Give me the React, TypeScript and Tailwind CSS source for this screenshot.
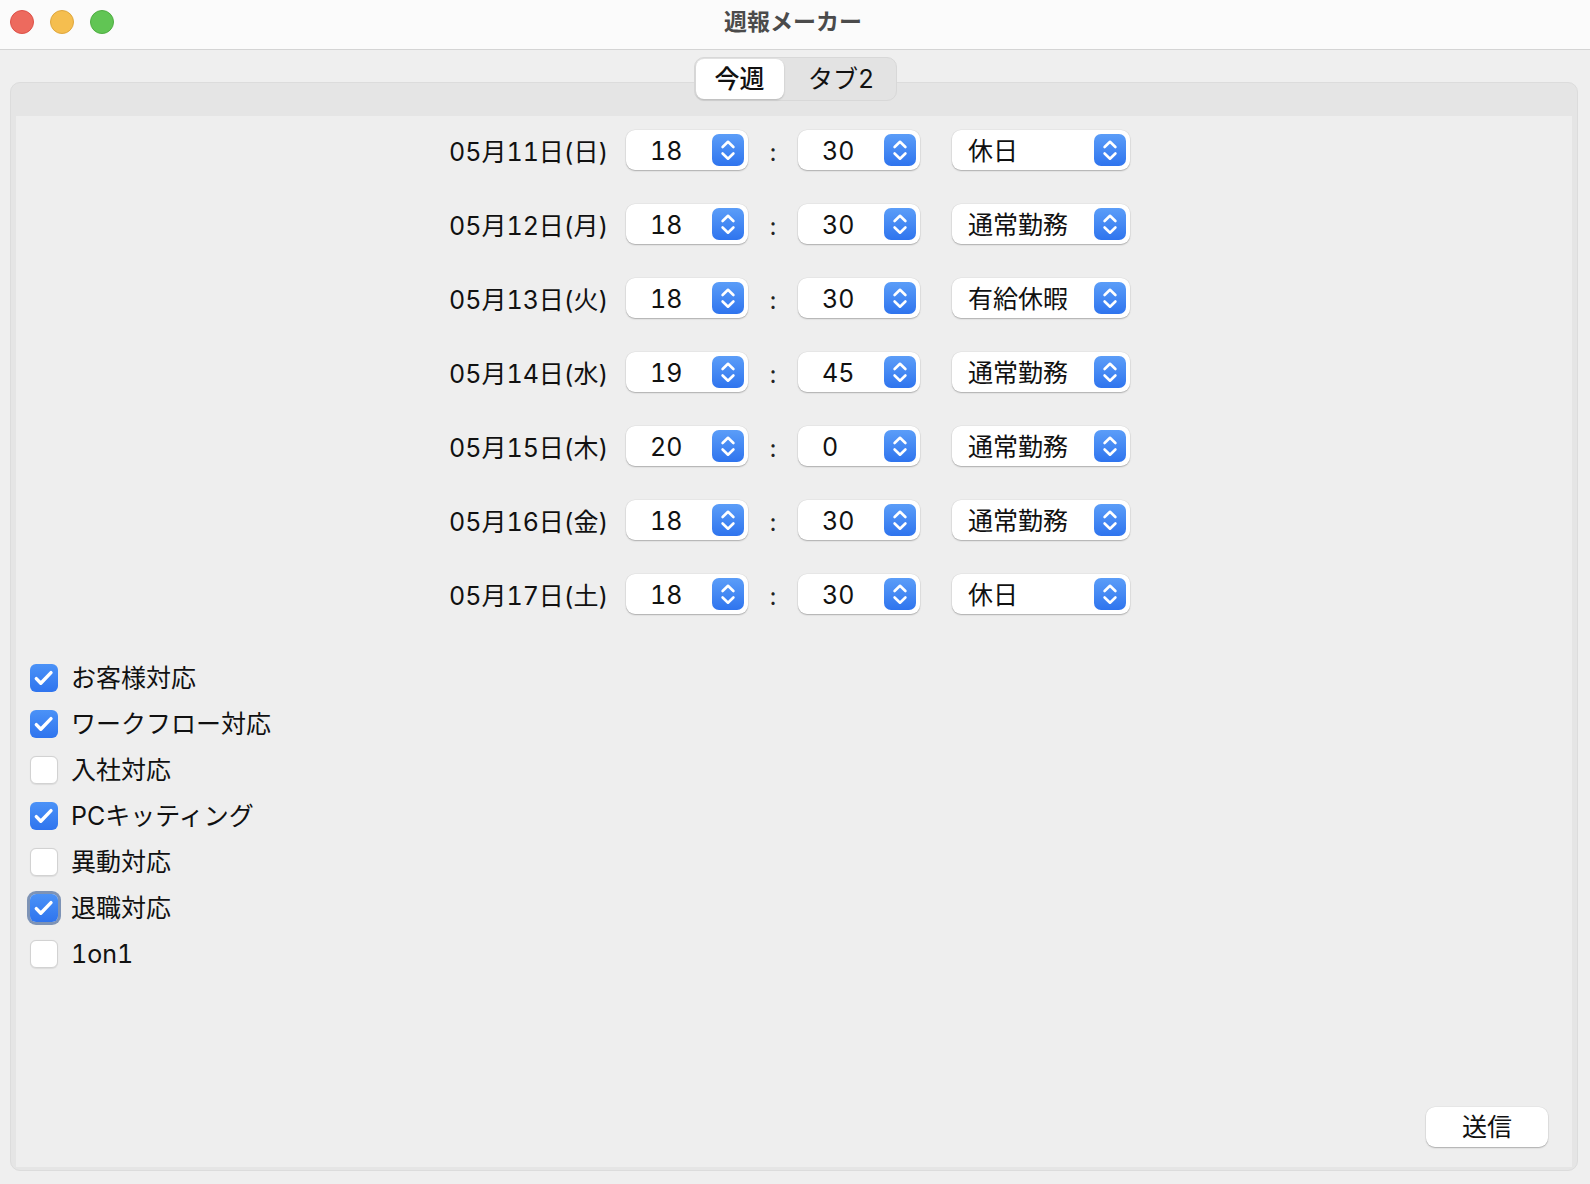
import React, { useState } from "react";

const FONT = { fontFamily: '"Inter", "Noto Sans CJK JP", "Noto Sans", sans-serif', fontVariantNumeric: "tabular-nums" };

const days = [
  { date: "05月11日(日)", hour: "18", min: "30", kind: "休日" },
  { date: "05月12日(月)", hour: "18", min: "30", kind: "通常勤務" },
  { date: "05月13日(火)", hour: "18", min: "30", kind: "有給休暇" },
  { date: "05月14日(水)", hour: "19", min: "45", kind: "通常勤務" },
  { date: "05月15日(木)", hour: "20", min: "0", kind: "通常勤務" },
  { date: "05月16日(金)", hour: "18", min: "30", kind: "通常勤務" },
  { date: "05月17日(土)", hour: "18", min: "30", kind: "休日" },
];

const tasks = [
  { name: "お客様対応", checked: true },
  { name: "ワークフロー対応", checked: true },
  { name: "入社対応", checked: false },
  { name: "PCキッティング", checked: true },
  { name: "異動対応", checked: false },
  { name: "退職対応", checked: true, focus: true },
  { name: "1on1", checked: false },
];

const Stepper = () => (
  <div className="flex h-[32px] w-[32px] items-center justify-center rounded-[7px] bg-gradient-to-b from-[#5b9df8] to-[#2f74ee]">
    <svg width="32" height="32" viewBox="0 0 32 32" fill="none">
      <path d="M10.6 13 L16 7.8 L21.4 13" stroke="white" strokeWidth="2.6" strokeLinecap="round" strokeLinejoin="round" />
      <path d="M10.6 19.5 L16 24.7 L21.4 19.5" stroke="white" strokeWidth="2.6" strokeLinecap="round" strokeLinejoin="round" />
    </svg>
  </div>
);

const Field = ({ value, width, pad }: { value: string; width: string; pad: string }) => (
  <div
    className={`flex h-[40px] ${width} items-center justify-between rounded-[9px] bg-white pr-[4px] ${pad} shadow-[0_1px_1.5px_rgba(0,0,0,0.25),0_0_0_0.5px_rgba(0,0,0,0.06)]`}
  >
    <span className="pt-[2px] text-[25px] leading-none text-[#111]">{value}</span>
    <Stepper />
  </div>
);

const Check = ({ checked, focus }: { checked: boolean; focus?: boolean }) =>
  checked ? (
    <div
      className={`flex h-[28px] w-[28px] items-center justify-center rounded-[6px] bg-gradient-to-b from-[#4b92f7] to-[#2f74ee] ${
        focus ? "ring-[3px] ring-[#7d93b6]" : ""
      }`}
    >
      <svg width="28" height="28" viewBox="0 0 28 28" fill="none">
        <path d="M6.3 14.6 L10.8 19.2 L21 8.6" stroke="white" strokeWidth="3.4" strokeLinecap="round" strokeLinejoin="round" />
      </svg>
    </div>
  ) : (
    <div className="h-[28px] w-[28px] rounded-[6px] border border-[#d2d2d2] bg-white shadow-[0_0.5px_1px_rgba(0,0,0,0.08)]" />
  );

export default function App() {
  const [tab, setTab] = useState(0);

  return (
    <div className="flex h-[1184px] w-full flex-col bg-[#efefef]" style={FONT}>
      {/* title bar */}
      <div className="flex h-[50px] shrink-0 items-start border-b border-[#d4d4d4] bg-[#fbfbfb] px-[10px] pt-[10px]">
        <div className="flex gap-[16px]">
          <div className="h-[24px] w-[24px] rounded-full border border-[#dd5148] bg-[#ed6a5e]" />
          <div className="h-[24px] w-[24px] rounded-full border border-[#dfa73e] bg-[#f5be4f]" />
          <div className="h-[24px] w-[24px] rounded-full border border-[#4fae42] bg-[#61c554]" />
        </div>
        <div className="flex-1 pr-[108px] text-center text-[23px] font-bold leading-[24px] text-[#4b4b4b]">
          週報メーカー
        </div>
      </div>

      <div className="flex flex-1 flex-col items-center">
        {/* tabs */}
        <div className="relative z-10 mt-[7px] flex h-[44px] w-[203px] items-center rounded-[10px] border border-[#d8d8d8] bg-[#e3e3e3] p-[1px]">
          {["今週", "タブ2"].map((t, i) => (
            <button
              key={t}
              onClick={() => setTab(i)}
              className={`flex h-[40px] items-center justify-center rounded-[8px] text-[25px] leading-none text-[#111] ${
                i === 0 ? "w-[88px]" : "flex-1 pl-[4px]"
              } ${tab === i ? "bg-white font-medium shadow-[0_1px_2px_rgba(0,0,0,0.2)]" : ""}`}
            >
              {t}
            </button>
          ))}
        </div>

        {/* panel */}
        <div className="-mt-[19px] mb-[13px] ml-[10px] mr-[12px] flex flex-1 flex-col self-stretch rounded-[10px] border border-[#dcdcdc] bg-[#e5e5e5] px-[5px] pb-[3px] pt-[33px]">
          <div className="flex flex-1 flex-col bg-[#eeeeee]">
            <div className="flex flex-col gap-[34px] pl-[433px] pt-[14px]">
              {days.map((d) => (
                <div key={d.date} className="flex h-[40px] items-center">
                  <div className="w-[177px] pt-[5px] text-[25px] leading-none text-[#111]">{d.date}</div>
                  <Field value={d.hour} width="w-[122px]" pad="pl-[24px]" />
                  <div className="w-[50px] pt-[6px] text-center text-[24px] leading-none text-[#222]">:</div>
                  <Field value={d.min} width="w-[122px]" pad="pl-[24px]" />
                  <div className="w-[32px]" />
                  <Field value={d.kind} width="w-[178px]" pad="pl-[16px]" />
                </div>
              ))}
            </div>

            <div className="mt-[50px] flex flex-col gap-[18px] pl-[14px]">
              {tasks.map((t) => (
                <div key={t.name} className="flex h-[28px] items-center gap-[13px]">
                  <Check checked={t.checked} focus={t.focus} />
                  <span className="pt-[1px] text-[25px] leading-none text-[#111]">{t.name}</span>
                </div>
              ))}
            </div>

            <div className="flex-1" />
            <div className="flex justify-end pb-[20px] pr-[24px]">
              <button className="flex h-[40px] w-[122px] items-center justify-center rounded-[9px] bg-white text-[25px] leading-none text-[#111] shadow-[0_1px_1.5px_rgba(0,0,0,0.25),0_0_0_0.5px_rgba(0,0,0,0.06)]">
                送信
              </button>
            </div>
          </div>
        </div>
      </div>
    </div>
  );
}
